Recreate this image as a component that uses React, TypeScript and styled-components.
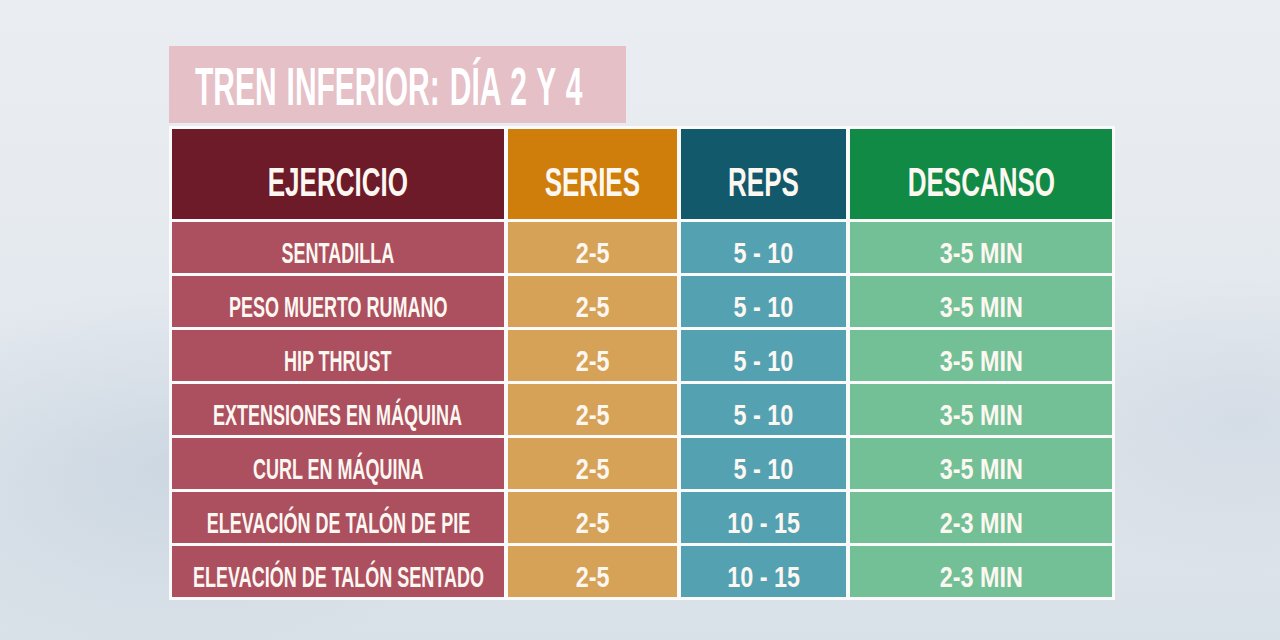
import React from "react";
import styled, { createGlobalStyle } from "styled-components";

const Global = createGlobalStyle`
  html, body { margin: 0; padding: 0; }
  body {
    width: 1280px;
    height: 640px;
    overflow: hidden;
    font-family: "Liberation Sans", Arial, sans-serif;
  }
`;

const Page = styled.div`
  width: 1280px;
  height: 640px;
  box-sizing: border-box;
  padding: 46px 0 0 169px;
  background:
    radial-gradient(ellipse 520px 260px at 180px 470px, rgba(190, 204, 218, 0.55), rgba(190, 204, 218, 0) 70%),
    radial-gradient(ellipse 420px 220px at 1240px 420px, rgba(200, 210, 222, 0.5), rgba(200, 210, 222, 0) 70%),
    linear-gradient(180deg, #eaeef2 0%, #e3e8ee 55%, #d9e1e8 100%);
  display: flex;
  flex-direction: column;
  gap: 3px;
`;

const TitleBox = styled.div`
  width: 457px;
  height: 77px;
  box-sizing: border-box;
  padding-left: 26px;
  padding-top: 2px;
  background: #e5c0c7;
  display: flex;
  align-items: center;
`;

const Label = styled.span<{ $sx: number; $size: number; $origin?: string }>`
  display: inline-block;
  white-space: nowrap;
  flex-shrink: 0;
  font-family: "Liberation Sans", Arial, sans-serif;
  font-weight: 700;
  font-size: ${(p) => p.$size}px;
  line-height: 1;
  color: #fcf7f1;
  transform: scaleX(${(p) => p.$sx});
  transform-origin: ${(p) => p.$origin ?? "center"};
`;

const TitleLabel = styled(Label)`
  word-spacing: 3px;
  color: #ffffff;
`;

const Table = styled.div`
  width: 946px;
  box-sizing: border-box;
  padding: 3px;
  background: #fbfbfb;
  display: grid;
  grid-template-columns: 332px 169px 165px 262px;
  grid-template-rows: 90px repeat(7, 51px);
  column-gap: 4px;
  row-gap: 3px;
`;

const Cell = styled.div<{ $bg: string; $head?: boolean }>`
  background: ${(p) => p.$bg};
  display: flex;
  align-items: center;
  justify-content: center;
  box-sizing: border-box;
  padding-top: ${(p) => (p.$head ? 16 : 10)}px;
  overflow: visible;
`;

const headColors = ["#6d1b29", "#cf7e0b", "#12596b", "#118a46"];
const bodyColors = ["#ac4f5f", "#d6a257", "#54a1b2", "#73c096"];
const headers = ["EJERCICIO", "SERIES", "REPS", "DESCANSO"];

const rows: [string, string, string, string][] = [
  ["SENTADILLA", "2-5", "5 - 10", "3-5 MIN"],
  ["PESO MUERTO RUMANO", "2-5", "5 - 10", "3-5 MIN"],
  ["HIP THRUST", "2-5", "5 - 10", "3-5 MIN"],
  ["EXTENSIONES EN MÁQUINA", "2-5", "5 - 10", "3-5 MIN"],
  ["CURL EN MÁQUINA", "2-5", "5 - 10", "3-5 MIN"],
  ["ELEVACIÓN DE TALÓN DE PIE", "2-5", "10 - 15", "2-3 MIN"],
  ["ELEVACIÓN DE TALÓN SENTADO", "2-5", "10 - 15", "2-3 MIN"],
];

export default function App() {
  return (
    <>
      <Global />
      <Page>
        <TitleBox>
          <TitleLabel $sx={0.555} $size={54} $origin="left center">
            TREN INFERIOR: DÍA 2 Y 4
          </TitleLabel>
        </TitleBox>
        <Table>
          {headers.map((h, i) => (
            <Cell key={h} $bg={headColors[i]} $head>
              <Label $sx={0.65} $size={40}>
                {h}
              </Label>
            </Cell>
          ))}
          {rows.map((r, ri) =>
            r.map((v, ci) => (
              <Cell key={`${ri}-${ci}`} $bg={bodyColors[ci]}>
                <Label $sx={ci === 0 ? 0.6 : 0.78} $size={30}>
                  {v}
                </Label>
              </Cell>
            ))
          )}
        </Table>
      </Page>
    </>
  );
}
